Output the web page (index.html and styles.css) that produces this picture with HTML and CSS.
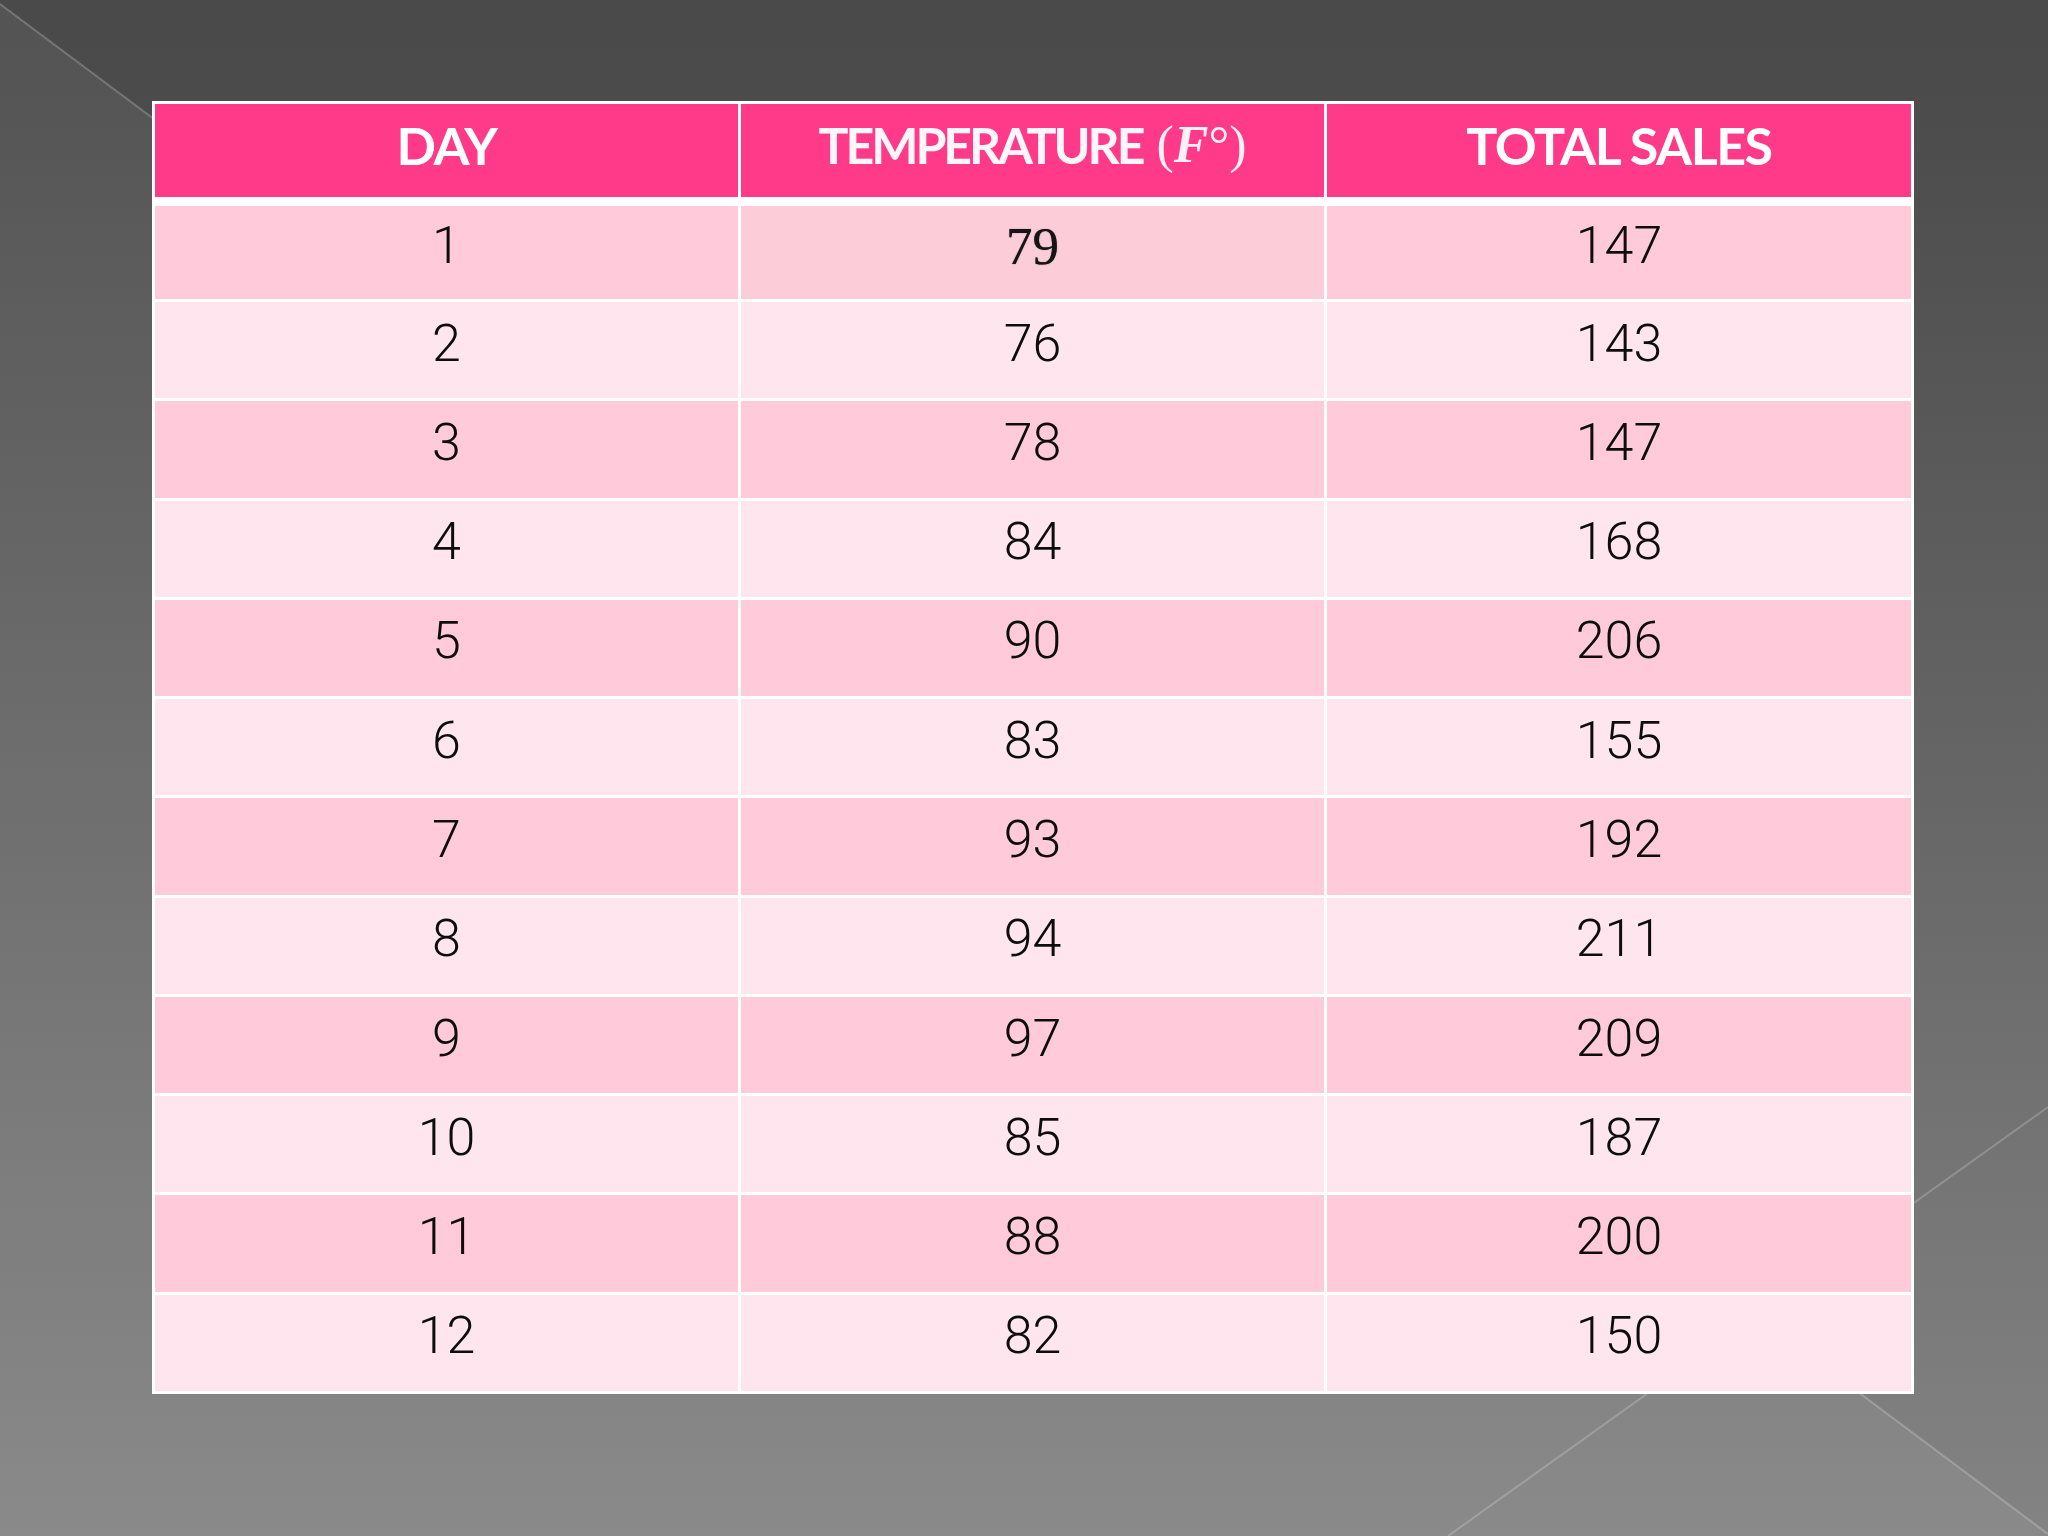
FILE: index.html
```html
<!DOCTYPE html>
<html lang="en">
<head>
<meta charset="utf-8">
<title>Day, Temperature and Total Sales</title>
<link rel="stylesheet" href="styles.css">
</head>
<body>
<main class="slide">
  <div class="sales-table">
    <div class="cell head">DAY</div>
    <div class="cell head temp-head"><span class="temp-word">TEMPERATURE</span><span class="temp-unit">(<i>F</i>°)</span></div>
    <div class="cell head">TOTAL SALES</div>

    <div class="cell odd">1</div><div class="cell odd serif">79</div><div class="cell odd">147</div>
    <div class="cell even">2</div><div class="cell even">76</div><div class="cell even">143</div>
    <div class="cell odd">3</div><div class="cell odd">78</div><div class="cell odd">147</div>
    <div class="cell even">4</div><div class="cell even">84</div><div class="cell even">168</div>
    <div class="cell odd">5</div><div class="cell odd">90</div><div class="cell odd">206</div>
    <div class="cell even">6</div><div class="cell even">83</div><div class="cell even">155</div>
    <div class="cell odd">7</div><div class="cell odd">93</div><div class="cell odd">192</div>
    <div class="cell even">8</div><div class="cell even">94</div><div class="cell even">211</div>
    <div class="cell odd">9</div><div class="cell odd">97</div><div class="cell odd">209</div>
    <div class="cell even">10</div><div class="cell even">85</div><div class="cell even">187</div>
    <div class="cell odd">11</div><div class="cell odd">88</div><div class="cell odd">200</div>
    <div class="cell even">12</div><div class="cell even">82</div><div class="cell even">150</div>
  </div>
</main>
</body>
</html>
```

FILE: styles.css
```css
html, body {
  margin: 0;
  padding: 0;
}

body {
  width: 2048px;
  height: 1536px;
  overflow: hidden;
  background-color: #4a4a4a;
  background-image:
    url("data:image/svg+xml;utf8,<svg xmlns='http://www.w3.org/2000/svg' width='2048' height='1536' viewBox='0 0 2048 1536'><polygon points='0,4 2048,1534 2048,1536 0,1536' fill='white' fill-opacity='0.06'/><line x1='0' y1='4' x2='2048' y2='1534' stroke='white' stroke-opacity='0.22' stroke-width='2'/><line x1='2048' y1='1107' x2='1448' y2='1536' stroke='white' stroke-opacity='0.2' stroke-width='2'/></svg>"),
    linear-gradient(180deg, #4a4a4a 0px, #4b4b4b 90px, #838383 1536px);
  background-repeat: no-repeat;
  background-size: 2048px 1536px, 2048px 1536px;
}

.slide {
  box-sizing: border-box;
  width: 2048px;
  height: 1536px;
  padding: 101px 0 0 152px;
}

.sales-table {
  box-sizing: border-box;
  width: 1762px;
  height: 1293px;
  padding: 3px;
  background: #ffffff;
  display: grid;
  grid-template-columns: 583px 583px 584px;
  grid-template-rows: 99px 93px repeat(11, 1fr);
  gap: 3px;
}

.cell {
  box-sizing: border-box;
  display: flex;
  align-items: center;
  justify-content: center;
  font-family: "Roboto", "Lato", "Liberation Sans", sans-serif;
  font-size: 52px;
  font-weight: 300;
  color: #0d0d0d;
  padding-bottom: 14px;
}

.head {
  background: #fe3a89;
  color: #ffffff;
  font-family: "Lato", "Liberation Sans", sans-serif;
  font-weight: 700;
  font-size: 52px;
  letter-spacing: -1.5px;
  margin-bottom: 6px;
  padding-bottom: 12px;
}

.temp-word {
  font-size: 50px;
  letter-spacing: -3px;
  color: #fff6f9;
}

.temp-unit {
  font-family: "Liberation Serif", serif;
  font-weight: 400;
  font-size: 52px;
  letter-spacing: 0;
  margin-left: 14px;
  color: #fff0f5;
}

.temp-unit i {
  font-weight: 700;
}

.odd {
  background: #ffcbdb;
}

.even {
  background: #ffe6ee;
}

.serif {
  font-family: "Liberation Serif", serif;
  font-weight: 400;
  font-size: 53px;
  color: #151515;
  text-shadow: 0 0 1px #333333;
  background: #fdccd9;
}
```
